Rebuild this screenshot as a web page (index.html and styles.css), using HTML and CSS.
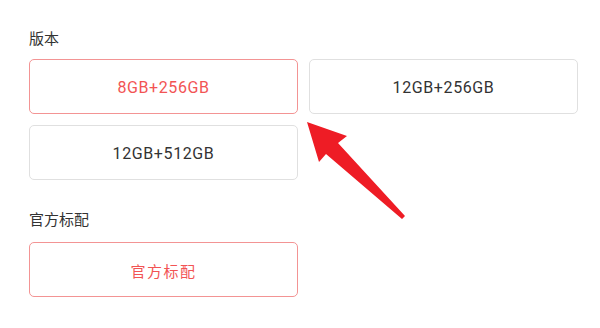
FILE: index.html
```html
<!DOCTYPE html>
<html>
<head>
<meta charset="utf-8">
<link rel="stylesheet" href="styles.css">
</head>
<body>
<div class="page">
  <div class="title first">版本</div>
  <div class="grid">
    <div class="opt active">8GB+256GB</div>
    <div class="opt plain">12GB+256GB</div>
    <div class="opt plain">12GB+512GB</div>
  </div>
  <div class="title second">官方标配</div>
  <div class="grid">
    <div class="opt active cn">官方标配</div>
  </div>
</div>
<svg class="arrow" width="600" height="328" viewBox="0 0 600 328">
  <polygon points="307,122 347,136 338,143 405,216 402,219 326,154 319,162" fill="#ee1c25"/>
</svg>
</body>
</html>
```
FILE: styles.css
```css
html, body { margin: 0; padding: 0; background: #fff; }
body { width: 600px; height: 328px; overflow: hidden; position: relative; font-family: "Noto Sans", "Noto Sans CJK SC", sans-serif; }
.page { padding: 28px 22px 0 29px; }
.title { font-size: 15px; line-height: 20px; color: #333; }
.first { margin-bottom: 11px; }
.second { margin-top: 29px; margin-bottom: 13px; }
.grid { display: grid; grid-template-columns: 269px 269px; column-gap: 11px; row-gap: 11px; }
.opt { height: 55px; box-sizing: border-box; border-radius: 5px; display: flex; align-items: center; justify-content: center; font-family: Roboto, "Noto Sans CJK SC", sans-serif; font-weight: 400; font-size: 16px; letter-spacing: 0.6px; padding-top: 1px; }
.plain { border: 1px solid #e0e0e0; color: #333; }
.cn { font-size: 15px; letter-spacing: 1.5px; }
.active { border: 1px solid #f39494; color: #f25454; }
.arrow { position: absolute; left: 0; top: 0; }
```
